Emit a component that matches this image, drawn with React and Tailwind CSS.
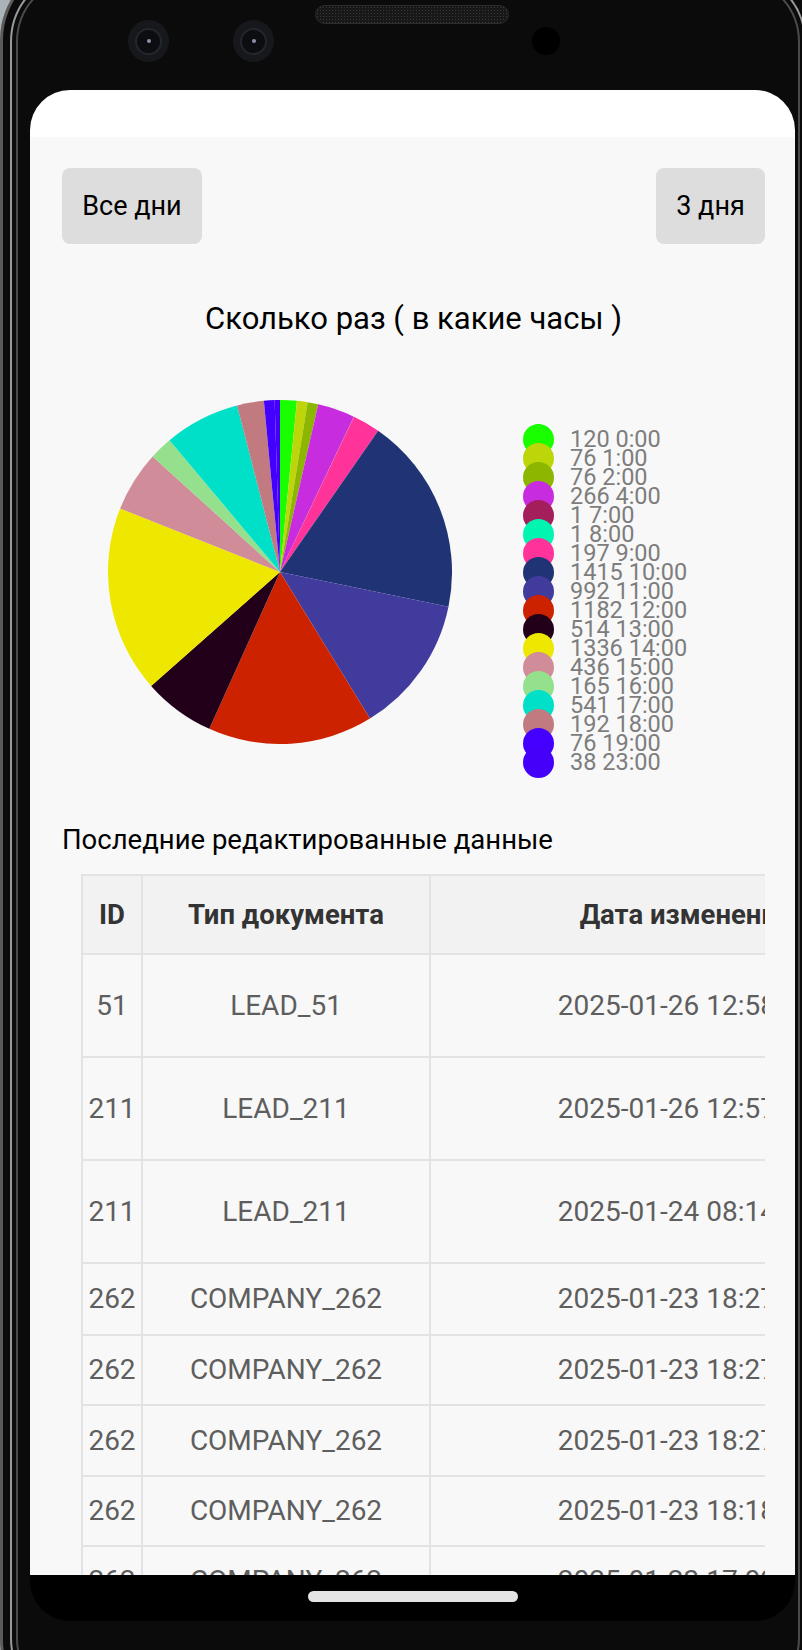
import React from "react";

const data = [
  [120, "0:00", "#1aff00"],
  [76, "1:00", "#bcd60a"],
  [76, "2:00", "#8db600"],
  [266, "4:00", "#c72ddf"],
  [1, "7:00", "#a31e5a"],
  [1, "8:00", "#00f5b0"],
  [197, "9:00", "#ff3399"],
  [1415, "10:00", "#1f3375"],
  [992, "11:00", "#413b9e"],
  [1182, "12:00", "#cc2200"],
  [514, "13:00", "#22001a"],
  [1336, "14:00", "#eee800"],
  [436, "15:00", "#d08c98"],
  [165, "16:00", "#95e08c"],
  [541, "17:00", "#00e0c8"],
  [192, "18:00", "#c07a80"],
  [76, "19:00", "#4400ff"],
  [38, "23:00", "#4400f8"],
];

const rows = [
  ["51", "LEAD_51", "2025-01-26 12:58:43", "h-[103px]"],
  ["211", "LEAD_211", "2025-01-26 12:57:12", "h-[103px]"],
  ["211", "LEAD_211", "2025-01-24 08:14:55", "h-[103px]"],
  ["262", "COMPANY_262", "2025-01-23 18:27:40", "h-[72px]"],
  ["262", "COMPANY_262", "2025-01-23 18:27:21", "h-[70px]"],
  ["262", "COMPANY_262", "2025-01-23 18:27:05", "h-[71px]"],
  ["262", "COMPANY_262", "2025-01-23 18:18:31", "h-[70px]"],
  ["262", "COMPANY_262", "2025-01-23 17:09:14", "h-[70px]"],
];

function Pie() {
  const total = data.reduce((s, d) => s + d[0], 0);
  const r = 172;
  const c = 172;
  let acc = 0;
  const paths = data.map((d, i) => {
    const a0 = (acc / total) * Math.PI * 2 - Math.PI / 2;
    acc += d[0];
    const a1 = (acc / total) * Math.PI * 2 - Math.PI / 2;
    const x0 = c + r * Math.cos(a0);
    const y0 = c + r * Math.sin(a0);
    const x1 = c + r * Math.cos(a1);
    const y1 = c + r * Math.sin(a1);
    const large = a1 - a0 > Math.PI ? 1 : 0;
    return (
      <path
        key={i}
        d={`M${c},${c} L${x0},${y0} A${r},${r} 0 ${large} 1 ${x1},${y1} Z`}
        fill={d[2]}
      />
    );
  });
  return (
    <svg width="344" height="344" viewBox="0 0 344 344" className="shrink-0">
      {paths}
    </svg>
  );
}

function Legend() {
  return (
    <div className="flex flex-col mt-[30px] ml-[71px]">
      {data.map((d, i) => (
        <div key={i} className="flex items-center h-[19.03px]">
          <div
            className="w-[31px] h-[31px] rounded-full shrink-0"
            style={{ backgroundColor: d[2] }}
          />
          <span className="ml-[16px] text-[23.5px] leading-[19px] text-[#7d7d7d] whitespace-nowrap">
            {d[0]} {d[1]}
          </span>
        </div>
      ))}
    </div>
  );
}

function Camera() {
  return (
    <div className="w-[41px] h-[42px] rounded-full bg-[#16181b] flex items-center justify-center shrink-0">
      <div className="w-[27px] h-[27px] rounded-full bg-[#0b0d10] border-[2px] border-[#23272d] flex items-center justify-center">
        <div className="w-[4px] h-[4px] rounded-full bg-[#8a93a8]" />
      </div>
    </div>
  );
}

export default function App() {
  return (
    <div className="w-[802px] h-[1650px] overflow-hidden bg-[#aab3b7] font-['Roboto','Noto_Sans',sans-serif]">
      <div className="mt-[-40px] w-[816px] h-[1760px] rounded-[80px] bg-[#0b0b0b] border-[3px] border-[#5a5a5a] p-[7px]">
        <div className="h-full rounded-[72px] border-[2px] border-[#9a9a9a] p-[4px]">
          <div className="h-full rounded-[66px] border-[2px] border-[#4a4a4a] bg-[#0b0b0b] flex flex-col">
            {/* top hardware */}
            <div className="h-[112px] flex items-start shrink-0">
              <div className="ml-[110px] mt-[42px]">
                <Camera />
              </div>
              <div className="ml-[64px] mt-[42px]">
                <Camera />
              </div>
              <div className="ml-[41px] mt-[27px] w-[194px] h-[19px] rounded-full border border-[#2c2c2c] bg-[#181818] bg-[radial-gradient(#3a3a3a_1px,transparent_1px)] bg-[length:3px_3px]" />
              <div className="ml-[23px] mt-[49px] w-[28px] h-[28px] rounded-full bg-[#000]" />
            </div>

            {/* screen */}
            <div className="ml-[12px] w-[765px] h-[1531px] rounded-[40px] overflow-hidden flex flex-col shrink-0">
              <div className="h-[47px] bg-white shrink-0" />
              <div className="h-[1438px] bg-[#f8f8f8] overflow-hidden shrink-0 pl-[32px] pr-[30px] pt-[31px]">
                <div className="flex justify-between">
                  <div className="h-[76px] w-[140px] rounded-[8px] bg-[#dddddd] flex items-center justify-center text-[27px] text-black">
                    Все дни
                  </div>
                  <div className="h-[76px] w-[109px] rounded-[8px] bg-[#dddddd] flex items-center justify-center text-[27px] text-black">
                    3 дня
                  </div>
                </div>

                <div className="mt-[57px] text-center text-[31px] leading-[36px] text-black">
                  Сколько раз ( в какие часы )
                </div>

                <div className="mt-[63px] flex items-start ml-[46px] h-[382px]">
                  <Pie />
                  <Legend />
                </div>

                <div className="mt-[41px] text-[27.5px] leading-[34px] text-black whitespace-nowrap">
                  Последние редактированные данные
                </div>

                <div className="mt-[17px] ml-[19px] w-[684px] overflow-hidden">
                  <table className="table-fixed border-collapse w-[860px] text-[28px]">
                    <colgroup>
                      <col className="w-[60px]" />
                      <col className="w-[288px]" />
                      <col className="w-[512px]" />
                    </colgroup>
                    <thead>
                      <tr className="h-[79px] bg-[#f2f2f2]">
                        <th className="border-[2px] border-[#e3e3e3] font-bold text-[#333] text-center text-[27.5px]">ID</th>
                        <th className="border-[2px] border-[#e3e3e3] font-bold text-[#333] text-center text-[27.5px]">Тип документа</th>
                        <th className="border-[2px] border-[#e3e3e3] font-bold text-[#333] text-center text-[27.5px] whitespace-nowrap">Дата изменения</th>
                      </tr>
                    </thead>
                    <tbody>
                      {rows.map((r, i) => (
                        <tr key={i} className={r[3]}>
                          <td className="border-[2px] border-[#e3e3e3] text-center text-[#5e5e5e]">{r[0]}</td>
                          <td className="border-[2px] border-[#e3e3e3] text-center text-[#5e5e5e]">{r[1]}</td>
                          <td className="border-[2px] border-[#e3e3e3] text-center text-[#5e5e5e] whitespace-nowrap">{r[2]}</td>
                        </tr>
                      ))}
                    </tbody>
                  </table>
                </div>
              </div>
              <div className="h-[46px] bg-black shrink-0 flex justify-center">
                <div className="mt-[16px] w-[210px] h-[11px] rounded-full bg-[#e4e4e4]" />
              </div>
            </div>
          </div>
        </div>
      </div>
    </div>
  );
}
